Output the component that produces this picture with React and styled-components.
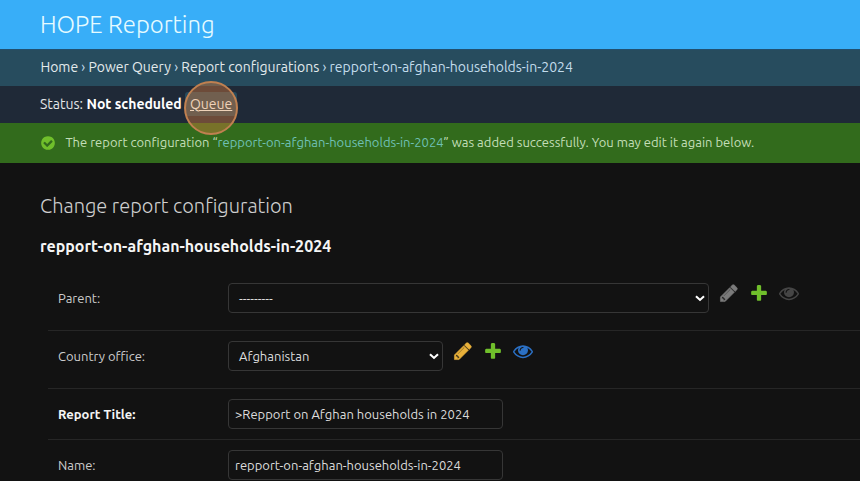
import React from 'react';
import styled, { createGlobalStyle } from 'styled-components';

const GlobalStyle = createGlobalStyle`
  *, *::before, *::after { box-sizing: border-box; }
  html, body { margin: 0; background: #121212; }
  body { font-family: "Ubuntu", "Open Sans", "Noto Sans", sans-serif; font-size: 13px; color: #d8d8d8; overflow: hidden; }
`;

const Page = styled.div`
  display: flex;
  flex-direction: column;
  width: 100%;
  height: 481px;
  overflow: hidden;
  white-space: nowrap;
`;

const Header = styled.header`
  display: flex;
  align-items: center;
  flex: 0 0 49px;
  padding: 0 40px;
  background: #38aef8;
`;

const SiteName = styled.h1`
  margin: 0;
  font-size: 24px;
  font-weight: 300;
  line-height: 32px;
  color: #e6fbff;
`;

const Bar = styled.div`
  display: flex;
  align-items: center;
  flex: 0 0 37px;
  padding: 0 40px 2px;
  font-size: 14px;
  line-height: 20px;
`;

const Breadcrumbs = styled(Bar)`
  padding-left: 40.4px;
  background: #274c5e;
  border-top: 1px solid #21506f;
  color: #c3dcec;
`;

const Crumb = styled.a`
  color: #e3eaec;
`;

const StatusBar = styled(Bar)`
  background: #1f2937;
  color: #e4e6e8;
`;

const StatusLabel = styled.span`
  width: 46.5px;
`;

const StatusValue = styled.strong`
  width: 103.5px;
  font-weight: 700;
  color: #fff;
`;

const QueueLink = styled.a`
  position: relative;
  color: #efd2b8;
  text-decoration: underline;
`;

const QueueBox = styled.span`
  position: absolute;
  left: -5px;
  top: -2px;
  width: 52px;
  height: 24px;
  border-radius: 3px;
  background: #264b5e;
`;

const QueueText = styled.span`
  position: relative;
  z-index: 2;
`;

const ClickMarker = styled.span`
  position: absolute;
  z-index: 1;
  left: -6.5px;
  top: -13px;
  width: 54px;
  height: 54px;
  border: 2px solid #c08050;
  border-radius: 50%;
  background: rgba(217, 124, 60, 0.42);
`;

const Message = styled.div`
  display: flex;
  align-items: center;
  flex: 0 0 40px;
  gap: 9px;
  padding: 0 40px;
  background: #326b1c;
  color: #c4dfb8;
`;

const MessageText = styled.span`
  padding: 0 0 2px 0.4px;
`;

const MessageLink = styled.a`
  color: #6fc0b4;
`;

const Content = styled.main`
  display: flex;
  flex-direction: column;
  padding: 29px 0 0 40px;
`;

const Title = styled.h2`
  margin: 0;
  font-size: 20px;
  font-weight: 300;
  line-height: 28px;
  color: #cfcfcf;
`;

const ObjectName = styled.h3`
  margin: 14px 0 15px;
  font-size: 16px;
  font-weight: 700;
  line-height: 24px;
  color: #f5f5f5;
`;

const FormRow = styled.div`
  display: flex;
  align-items: flex-start;
  height: ${p => p.$height}px;
  margin-left: 8px;
  padding: 10px 0 0 10px;
  border-bottom: 1px solid #262626;
`;

const Label = styled.label`
  flex: 0 0 170px;
  line-height: 30px;
  font-weight: ${p => (p.$required ? 700 : 400)};
  color: ${p => (p.$required ? '#f4f4f4' : '#cccccc')};
`;

const Field = styled.div`
  display: flex;
  align-items: center;
  justify-content: space-between;
  width: ${p => p.$width}px;
  height: 30px;
  padding: 0 ${p => (p.$select ? '3px 0 10px' : '6px')};
  border: 1px solid #363636;
  border-radius: 4px;
  color: #dcdcdc;
`;

const Actions = styled.div`
  display: flex;
  gap: 10px;
  padding-left: 10.4px;
`;

const Icon = ({ size = 20, color, d, weight = 0 }) => (
  <svg width={size} height={size} viewBox="0 0 1792 1792" fill={color} stroke={color} strokeWidth={weight} aria-hidden="true"><path d={d} /></svg>
);

const CHECK = 'M1412 734q0-28-18-46l-91-90q-19-19-45-19t-45 19l-408 407-226-226q-19-19-45-19t-45 19l-91 90q-18 18-18 46 0 27 18 45l362 362q19 19 45 19 27 0 46-19l543-543q18-18 18-45zm252 162q0 209-103 385.5t-279.5 279.5-385.5 103-385.5-103-279.5-279.5-103-385.5 103-385.5 279.5-279.5 385.5-103 385.5 103 279.5 279.5 103 385.5z';
const PLUS = 'M1600 796v192q0 40-28 68t-68 28h-416v416q0 40-28 68t-68 28h-192q-40 0-68-28t-28-68v-416h-416q-40 0-68-28t-28-68v-192q0-40 28-68t68-28h416v-416q0-40 28-68t68-28h192q40 0 68 28t28 68v416h416q40 0 68 28t28 68z';
const PENCIL = 'M491 1536l91-91-235-235-91 91v107h128v128h107zm523-928q0-22-22-22-10 0-17 7l-542 542q-7 7-7 17 0 22 22 22 10 0 17-7l542-542q7-7 7-17zm-54-192l416 416-832 832h-416v-416zm683 96q0 53-37 90l-166 166-416-416 166-165q36-38 90-38 53 0 91 38l235 234q37 39 37 91z';
const EYE = 'M1664 960q-152-236-381-353 61 104 61 225 0 185-131.5 316.5t-316.5 131.5-316.5-131.5-131.5-316.5q0-121 61-225-229 117-381 353 133 205 333.5 326.5t434.5 121.5 434.5-121.5 333.5-326.5zm-720-384q0-20-14-34t-34-14q-125 0-214.5 89.5t-89.5 214.5q0 20 14 34t34 14 34-14 14-34q0-86 61-147t147-61q20 0 34-14t14-34zm848 384q0 34-20 69-140 230-376.5 368.5t-499.5 138.5-499.5-139-376.5-368q-20-35-20-69t20-69q140-229 376.5-368t499.5-139 499.5 139 376.5 368q20 35 20 69z';

const Chevron = () => (
  <svg width="10" height="7" viewBox="0 0 10 7" fill="none" stroke="#fff" strokeWidth="2.1" aria-hidden="true"><path d="M1 1.2 5 4.9 9 1.2" /></svg>
);

const RelatedActions = ({ enabled }) => (
  <Actions>
    <Icon color={enabled ? '#e9b13a' : '#7b7b7b'} d={PENCIL} weight={50} />
    <Icon color="#70bf2b" d={PLUS} />
    <Icon color={enabled ? '#2b70c4' : '#454545'} d={EYE} />
  </Actions>
);

export default function App() {
  return (
    <Page>
      <GlobalStyle />
      <Header><SiteName>HOPE Reporting</SiteName></Header>
      <Breadcrumbs>
        <span>
          <Crumb>Home</Crumb> › <Crumb>Power Query</Crumb> › <Crumb>Report configurations</Crumb> › repport-on-afghan-households-in-2024
        </span>
      </Breadcrumbs>
      <StatusBar>
        <StatusLabel>Status:</StatusLabel>
        <StatusValue>Not scheduled</StatusValue>
        <QueueLink><QueueBox /><ClickMarker /><QueueText>Queue</QueueText></QueueLink>
      </StatusBar>
      <Message>
        <Icon size={16} color="#70bf2b" d={CHECK} />
        <MessageText>The report configuration “<MessageLink>repport-on-afghan-households-in-2024</MessageLink>” was added successfully. You may edit it again below.</MessageText>
      </Message>
      <Content>
        <Title>Change report configuration</Title>
        <ObjectName>repport-on-afghan-households-in-2024</ObjectName>
        <FormRow $height={58}>
          <Label>Parent:</Label>
          <Field $select $width={481}>---------<Chevron /></Field>
          <RelatedActions />
        </FormRow>
        <FormRow $height={58}>
          <Label>Country office:</Label>
          <Field $select $width={215}>Afghanistan<Chevron /></Field>
          <RelatedActions enabled />
        </FormRow>
        <FormRow $height={51}>
          <Label $required>Report Title:</Label>
          <Field $width={275}>&gt;Repport on Afghan households in 2024</Field>
        </FormRow>
        <FormRow $height={51}>
          <Label>Name:</Label>
          <Field $width={275}>repport-on-afghan-households-in-2024</Field>
        </FormRow>
      </Content>
    </Page>
  );
}
